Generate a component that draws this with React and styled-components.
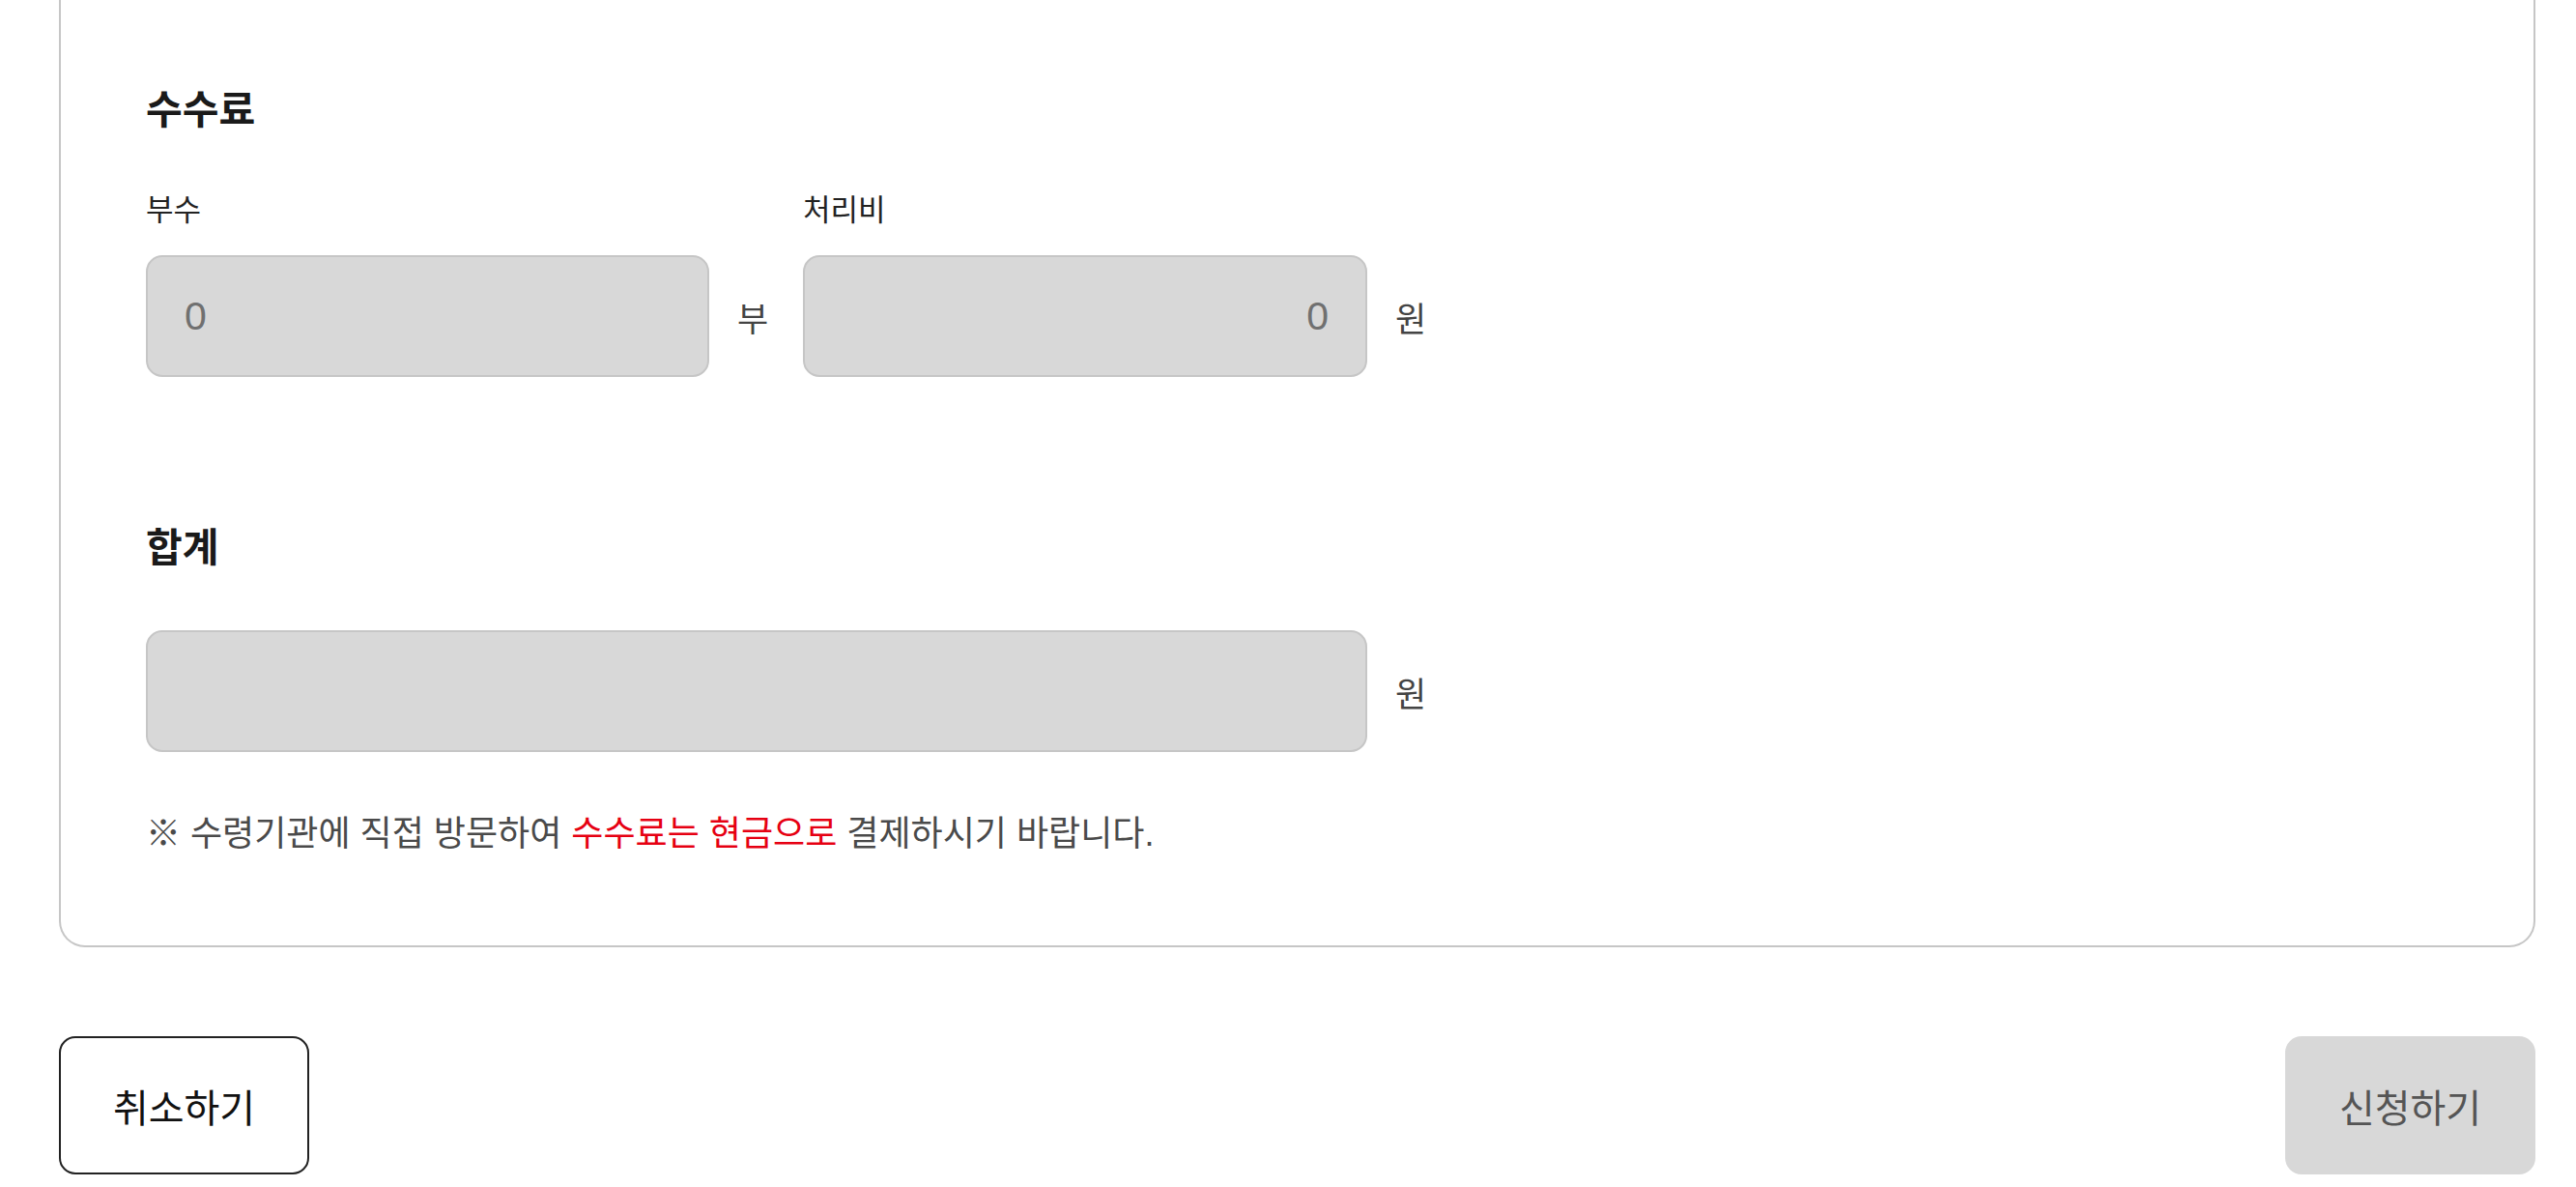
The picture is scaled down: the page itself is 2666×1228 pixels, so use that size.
import React from "react";
import styled, { createGlobalStyle } from "styled-components";

const GlobalStyle = createGlobalStyle`
  html, body {
    margin: 0;
    padding: 0;
    background: #ffffff;
  }
  body {
    font-family: "Liberation Sans", "Noto Sans CJK KR", sans-serif;
    color: #222222;
  }
`;

const Page = styled.div`
  width: 2666px;
  height: 1228px;
  overflow: hidden;
  box-sizing: border-box;
  padding: 0 42px 0 61px;
`;

const Card = styled.section`
  border: 2px solid #c6c6c6;
  border-top: none;
  border-radius: 0 0 27px 27px;
  padding: 88px 90px 91px 88px;
`;

const SectionTitle = styled.h2`
  margin: 0;
  font-size: 41px;
  line-height: 52px;
  font-weight: 700;
  color: #1a1a1a;
`;

const Section = styled.div`
  & + & {
    margin-top: 151px;
  }
`;

const FieldRow = styled.div`
  display: flex;
  align-items: flex-end;
  margin-top: ${({ $gap }) => $gap}px;
`;

const Field = styled.div`
  display: flex;
  flex-direction: column;
  gap: 27px;
`;

const Label = styled.label`
  font-size: 31px;
  line-height: 38px;
  color: #222222;
`;

const InputLine = styled.div`
  display: flex;
  align-items: center;
`;

const Input = styled.input`
  box-sizing: border-box;
  width: ${({ $width }) => $width}px;
  height: 126px;
  border: 2px solid #c6c6c6;
  border-radius: 17px;
  background: #d8d8d8;
  padding: 0 38px;
  font-family: "Liberation Sans", "Noto Sans CJK KR", sans-serif;
  font-size: 41px;
  color: #707070;
  text-align: ${({ $align }) => $align || "left"};
  outline: none;
`;

const Unit = styled.span`
  width: 97px;
  box-sizing: border-box;
  padding-left: 29px;
  font-size: 35px;
  color: #444444;
`;

const Notice = styled.p`
  margin: 61px 0 0;
  font-size: 36px;
  line-height: 48px;
  color: #4a4a4a;
`;

const Red = styled.span`
  color: #e60012;
`;

const ButtonBar = styled.div`
  display: flex;
  justify-content: space-between;
  margin-top: 92px;
`;

const Button = styled.button`
  box-sizing: border-box;
  width: 259px;
  height: 143px;
  border-radius: 17px;
  font-family: "Liberation Sans", "Noto Sans CJK KR", sans-serif;
  font-size: 40px;
  cursor: pointer;
  border: ${({ $primary }) => ($primary ? "none" : "2px solid #222222")};
  background: ${({ $primary }) => ($primary ? "#d8d8d8" : "#ffffff")};
  color: ${({ $primary }) => ($primary ? "#555555" : "#111111")};
`;

export default function App() {
  return (
    <>
      <GlobalStyle />
      <Page>
        <Card>
          <Section>
            <SectionTitle>수수료</SectionTitle>
            <FieldRow $gap={59}>
              <Field>
                <Label>부수</Label>
                <InputLine>
                  <Input $width={583} readOnly value="0" />
                  <Unit>부</Unit>
                </InputLine>
              </Field>
              <Field>
                <Label>처리비</Label>
                <InputLine>
                  <Input $width={584} $align="right" readOnly value="0" />
                  <Unit>원</Unit>
                </InputLine>
              </Field>
            </FieldRow>
          </Section>

          <Section>
            <SectionTitle>합계</SectionTitle>
            <FieldRow $gap={59}>
              <InputLine>
                <Input $width={1264} readOnly value="" />
                <Unit>원</Unit>
              </InputLine>
            </FieldRow>
          </Section>

          <Notice>
            ※ 수령기관에 직접 방문하여 <Red>수수료는 현금으로</Red> 결제하시기 바랍니다.
          </Notice>
        </Card>

        <ButtonBar>
          <Button type="button">취소하기</Button>
          <Button type="button" $primary>신청하기</Button>
        </ButtonBar>
      </Page>
    </>
  );
}
